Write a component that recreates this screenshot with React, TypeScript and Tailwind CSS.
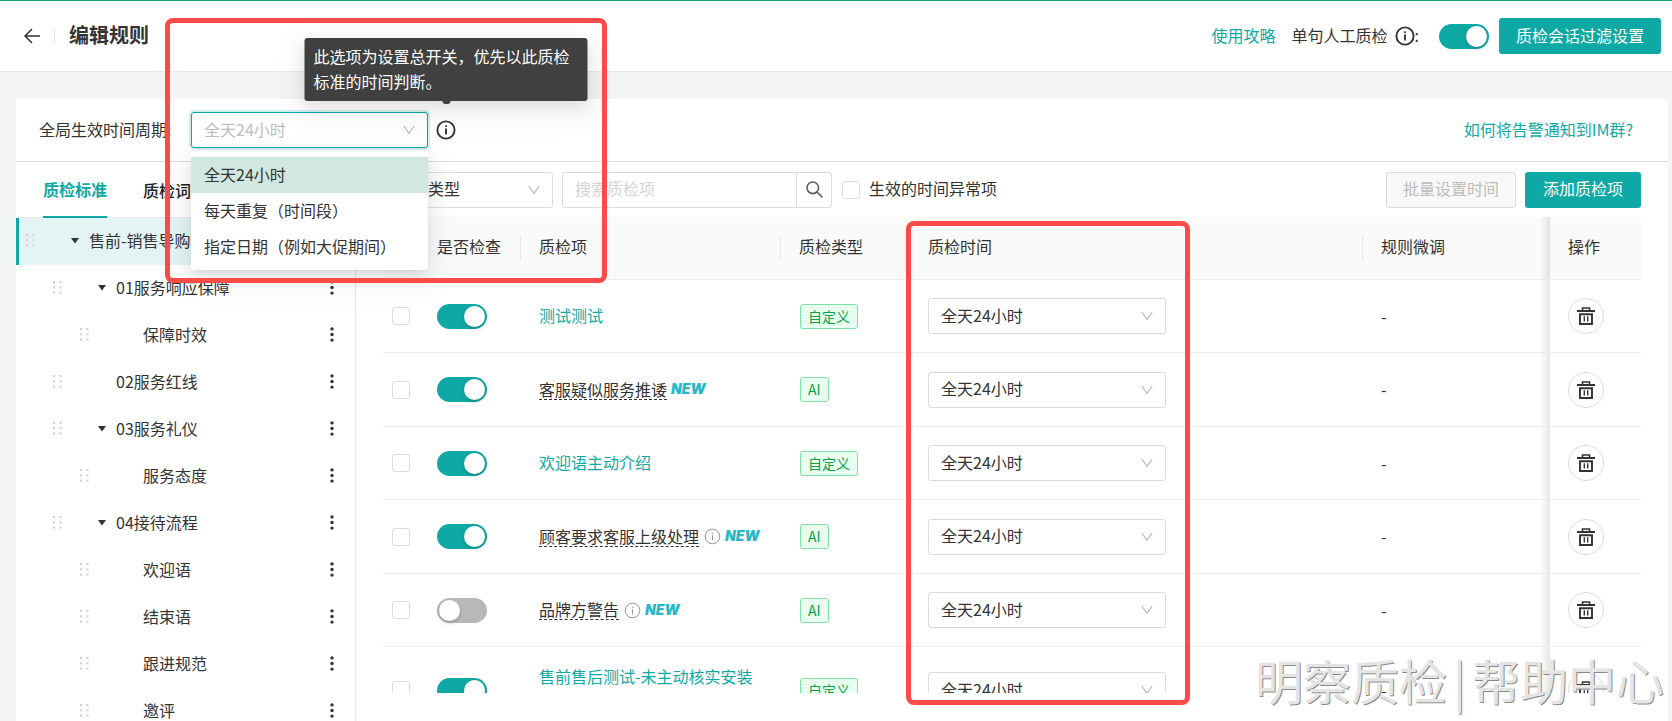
import React from "react";

type TreeNode = { label: string; level: 0 | 1 | 2; open?: boolean; active?: boolean };

const tree: TreeNode[] = [
  { label: "售前-销售导购类", level: 0, open: true, active: true },
  { label: "01服务响应保障", level: 1, open: true },
  { label: "保障时效", level: 2 },
  { label: "02服务红线", level: 1 },
  { label: "03服务礼仪", level: 1, open: true },
  { label: "服务态度", level: 2 },
  { label: "04接待流程", level: 1, open: true },
  { label: "欢迎语", level: 2 },
  { label: "结束语", level: 2 },
  { label: "跟进规范", level: 2 },
  { label: "邀评", level: 2 },
];

const indents = ["pl-[7px]", "pl-[34px]", "pl-[61px]"];

type Rule = { name: string; type: "自定义" | "AI"; on: boolean; info?: boolean };

const rules: Rule[] = [
  { name: "测试测试", type: "自定义", on: true },
  { name: "客服疑似服务推诿", type: "AI", on: true },
  { name: "欢迎语主动介绍", type: "自定义", on: true },
  { name: "顾客要求客服上级处理", type: "AI", on: true, info: true },
  { name: "品牌方警告", type: "AI", on: false, info: true },
  { name: "售前售后测试-未主动核实安装服务", type: "自定义", on: true },
];

const periods = ["全天24小时", "每天重复（时间段）", "指定日期（例如大促期间）"];

function InfoIcon({ className, bold }: { className: string; bold?: boolean }) {
  const w = bold ? 1.9 : 1.1;
  return (
    <svg viewBox="0 0 20 20" className={className} fill="none" stroke="currentColor" strokeWidth={w} aria-hidden="true">
      <circle cx="10" cy="10" r="8.6" />
      <path d="M10 8.6v5.8" />
      <circle cx="10" cy="6.2" r={bold ? 0.6 : 0.5} fill="currentColor" strokeWidth={bold ? 1 : 0.8} />
    </svg>
  );
}

function Chevron() {
  return (
    <svg
      viewBox="0 0 12 12"
      className="pointer-events-none absolute top-1/2 right-[13px] h-3 w-3 -translate-y-1/2 text-[#bdbdbd]"
      fill="none"
      stroke="currentColor"
      strokeWidth="1.3"
      aria-hidden="true"
    >
      <path d="M0.8 2L6 9.4L11.2 2" />
    </svg>
  );
}

function SelectBox({ label, options, className }: { label: string; options: string[]; className: string }) {
  return (
    <div className={`relative ${className}`}>
      <select
        aria-label={label}
        className="block h-9 w-full appearance-none rounded-[3px] border border-[#dcdcdc] bg-white px-3 pb-[2px] text-[#333] outline-none"
      >
        {options.map((o) => (
          <option key={o}>{o}</option>
        ))}
      </select>
      <Chevron />
    </div>
  );
}

function Toggle({ label, on }: { label: string; on: boolean }) {
  return (
    <input
      type="checkbox"
      role="switch"
      aria-label={label}
      defaultChecked={on}
      className="block h-[25px] w-[50px] shrink-0 appearance-none rounded-full bg-[#b8b8b8] p-[2px] before:block before:h-[21px] before:w-[21px] before:rounded-full before:bg-white before:shadow-[0_2px_4px_rgba(0,35,11,0.2)] checked:bg-[#0fa9a5] checked:before:ml-[25px]"
    />
  );
}

const box = "block h-[18px] w-[18px] shrink-0 appearance-none rounded-[3px] border border-[#dcdcdc] bg-white checked:bg-[#0fa9a5]";

function TrashIcon() {
  return (
    <svg viewBox="0 0 18 18" className="h-[18px] w-[18px]" fill="none" stroke="#333" aria-hidden="true">
      <path d="M5.5 3.5V1h7v2.5" strokeWidth="1.6" />
      <path d="M0 4h18" strokeWidth="2" />
      <path d="M3 7.2h12V17H3z" strokeWidth="1.9" />
      <path d="M7.3 9.3v5.2M10.7 9.3v5.2" strokeWidth="1.4" />
    </svg>
  );
}

function DragDots() {
  return (
    <svg viewBox="0 0 9 13" className="h-[13px] w-[9px] shrink-0" fill="#cfcfcf" aria-hidden="true">
      {[0, 5.3, 10.6].map((y) => (
        <g key={y}>
          <rect x="0" y={y} width="2" height="2" />
          <rect x="6.5" y={y} width="2" height="2" />
        </g>
      ))}
    </svg>
  );
}

function TreeRow({ node }: { node: TreeNode }) {
  return (
    <li
      className={`flex h-[47px] items-center border-l-[3px] pr-[21px] pb-[2px] ${
        node.active ? "border-[#0fa9a5] bg-[#e4f4f5]" : "border-transparent"
      } ${indents[node.level]}`}
    >
      <DragDots />
      <span className="ml-9 flex w-[18px] shrink-0 justify-start">
        {node.open && (
          <svg viewBox="0 0 8 6" className="h-[6px] w-2" fill="#333" aria-hidden="true">
            <path d="M0 0h8L4 5.6z" />
          </svg>
        )}
      </span>
      <span className="flex-1 whitespace-nowrap">{node.label}</span>
      <button aria-label={`${node.label}更多操作`} className="shrink-0">
        <svg viewBox="0 0 4 15" className="h-[15px] w-1" fill="#333" aria-hidden="true">
          <circle cx="2" cy="1.9" r="1.7" />
          <circle cx="2" cy="7.5" r="1.7" />
          <circle cx="2" cy="13.1" r="1.7" />
        </svg>
      </button>
    </li>
  );
}

function HeadCell({ text, divider }: { text: string; divider?: boolean }) {
  return (
    <th className="relative px-[18px] pb-[3px] text-left font-normal">
      {text}
      {divider && <span className="absolute top-1/2 right-0 h-[26px] w-px -translate-y-1/2 bg-[#e8e8e8]" />}
    </th>
  );
}

function EdgeShadow() {
  return <span className="absolute inset-y-0 right-full w-[10px] bg-linear-to-l from-black/10 to-transparent" />;
}

function RuleName({ rule }: { rule: Rule }) {
  if (rule.type === "自定义") {
    return (
      <a href="#rule" className="block pb-[2px] leading-[25px] text-[#0fa9a5]">
        {rule.name}
      </a>
    );
  }
  return (
    <div className="flex items-center whitespace-nowrap">
      <span className="border-b border-dashed border-[#333] leading-[19px]">{rule.name}</span>
      {rule.info && <InfoIcon className="ml-[5px] h-[17px] w-[17px] shrink-0 text-[#8c8c8c]" />}
      <span className="ml-1 pb-[2px] font-[Inter,sans-serif] text-[14px] leading-[19px] font-black text-[#28b9c8] italic">NEW</span>
    </div>
  );
}

export default function App() {
  return (
    <div className="relative flex h-screen flex-col overflow-hidden bg-[#f3f5f5] font-['Noto_Sans_CJK_SC',sans-serif] text-[16px] leading-[25px] text-[#333]">
      <header className="flex h-[72px] shrink-0 items-center border-t border-b border-t-[#12a37f] border-b-[#e8e8e8] bg-white pr-[11px] pl-6">
        <button aria-label="返回">
          <svg viewBox="0 0 16 16" className="h-4 w-4" fill="none" stroke="#333" strokeWidth="1.5" aria-hidden="true">
            <path d="M16 8H1.2M8 1L1 8l7 7" />
          </svg>
        </button>
        <span className="mx-[14px] h-[14px] w-px bg-[#e8e8e8]" />
        <h1 className="pb-[3px] text-[20px] font-bold">编辑规则</h1>
        <a href="#guide" className="mr-4 ml-auto pb-[2px] text-[#0fa9a5]">
          使用攻略
        </a>
        <div className="mr-5 flex items-center">
          <span className="pb-[2px]">单句人工质检</span>
          <InfoIcon bold className="ml-[7px] h-5 w-5" />
          <span className="pb-[2px]">:</span>
        </div>
        <Toggle label="单句人工质检" on />
        <button className="ml-[10px] h-9 rounded-[3px] bg-[#0fa9a5] px-[17px] pb-[2px] text-white">质检会话过滤设置</button>
      </header>

      <main className="mt-[27px] mr-1 ml-4 flex min-h-0 flex-1 flex-col bg-white">
        <section className="flex h-[63px] shrink-0 items-center border-b border-[#dcdcdc] pr-[35px] pl-[23px]">
          <label htmlFor="global-period" className="w-[152px] pb-[2px]">
            全局生效时间周期:
          </label>
          <div className="relative z-20 w-[237px]">
            <select
              id="global-period"
              className="block h-9 w-full appearance-none rounded-[3px] border border-[#0fa9a5] bg-white px-3 pb-[2px] text-[#bdbdbd] shadow-[0_0_0_2px_rgba(15,169,165,0.2)] outline-none"
            >
              {periods.map((p) => (
                <option key={p}>{p}</option>
              ))}
            </select>
            <Chevron />
            <ul
              role="listbox"
              aria-label="全局生效时间周期选项"
              className="absolute top-10 left-0 w-full rounded-[3px] bg-white py-[5px] shadow-[0_3px_6px_-4px_rgba(0,0,0,0.12),0_6px_16px_rgba(0,0,0,0.08),0_9px_28px_8px_rgba(0,0,0,0.05)]"
            >
              {periods.map((p, i) => (
                <li
                  key={p}
                  role="option"
                  aria-selected={i === 0}
                  className={`flex h-9 items-center px-[13px] pb-[2px] whitespace-nowrap ${i === 0 ? "bg-[#d1e8e1]" : ""}`}
                >
                  {p}
                </li>
              ))}
            </ul>
          </div>
          <div className="relative ml-2">
            <InfoIcon bold className="h-5 w-5" />
            <div
              role="tooltip"
              className="absolute bottom-full left-1/2 z-30 mb-[19px] w-[283px] -translate-x-1/2 rounded-[3px] bg-[#404040] px-[9px] pt-[6px] pb-[7px] text-white shadow-[0_6px_16px_rgba(0,0,0,0.08),0_9px_28px_8px_rgba(0,0,0,0.05)]"
            >
              此选项为设置总开关，优先以此质检标准的时间判断。
              <span className="absolute top-full left-1/2 h-[3px] w-2 -translate-x-1/2 rounded-b-full bg-[#404040]" />
            </div>
          </div>
          <a href="#alarm" className="ml-auto pb-[2px] text-[#0fa9a5]">
            如何将告警通知到IM群?
          </a>
        </section>

        <div className="flex min-h-0 flex-1">
          <aside className="flex w-[340px] shrink-0 flex-col overflow-hidden border-r border-[#e8e8e8]">
            <nav className="flex h-[56px] shrink-0 items-stretch gap-9 border-b border-[#e8e8e8] pl-[27px] font-medium">
              <a href="#standard" className="-mb-px flex items-center border-b-2 border-[#0fa9a5] font-bold text-[#0fa9a5]">
                质检标准
              </a>
              <a href="#words" className="flex items-center pt-[2px] text-[#222]">
                质检词库
              </a>
            </nav>
            <ul>
              {tree.map((n) => (
                <TreeRow key={n.label} node={n} />
              ))}
            </ul>
          </aside>

          <div className="mr-[27px] mb-7 ml-[27px] flex min-w-0 flex-1 flex-col overflow-hidden">
            <div className="flex h-[55px] shrink-0 items-center">
              <SelectBox label="类型" options={["全部类型"]} className="w-[170px]" />
              <div className="ml-[9px] flex h-9 w-[270px] rounded-[3px] border border-[#dcdcdc]">
                <input
                  type="search"
                  aria-label="搜索质检项"
                  placeholder="搜索质检项"
                  className="min-w-0 flex-1 px-3 pb-[2px] outline-none placeholder:text-[#d4d4d4]"
                />
                <button aria-label="搜索" className="flex w-[35px] items-center justify-center border-l border-[#dcdcdc]">
                  <svg viewBox="0 0 17 17" className="h-[17px] w-[17px]" fill="none" stroke="#5c5c5c" strokeWidth="1.6" aria-hidden="true">
                    <circle cx="6.8" cy="6.8" r="5.8" />
                    <path d="M11 11l5.4 5.4" />
                  </svg>
                </button>
              </div>
              <label className="ml-[10px] flex items-center gap-[9px]">
                <input type="checkbox" className={box} />
                <span className="pb-[2px]">生效的时间异常项</span>
              </label>
              <button className="ml-auto h-9 rounded-[3px] border border-[#dcdcdc] bg-[#f8f8f8] px-4 pb-[2px] text-[#bdbdbd]">
                批量设置时间
              </button>
              <button className="ml-[9px] h-9 rounded-[3px] bg-[#0fa9a5] px-[18px] pb-[2px] text-white">添加质检项</button>
            </div>

            <div className="min-h-0 flex-1 overflow-hidden">
              <table className="w-full table-fixed border-separate border-spacing-0">
                <colgroup>
                  <col className="w-[36px]" />
                  <col className="w-[102px]" />
                  <col className="w-[260px]" />
                  <col className="w-[129px]" />
                  <col />
                  <col className="w-[187px]" />
                  <col className="w-[91px]" />
                </colgroup>
                <thead>
                  <tr className="h-[63px] bg-[#fafafa] *:border-b *:border-[#ececec]">
                    <th className="pl-[9px]">
                      <input type="checkbox" aria-label="全选" className={box} />
                    </th>
                    <HeadCell text="是否检查" divider />
                    <HeadCell text="质检项" divider />
                    <HeadCell text="质检类型" divider />
                    <HeadCell text="质检时间" divider />
                    <HeadCell text="规则微调" />
                    <th className="relative px-[18px] pb-[3px] text-left font-normal">
                      <EdgeShadow />
                      操作
                    </th>
                  </tr>
                </thead>
                <tbody>
                  {rules.map((r) => (
                    <tr key={r.name} className="h-[73px] *:border-b *:border-[#ececec] even:h-[74px]">
                      <td className="pl-[9px]">
                        <input type="checkbox" aria-label={`选择${r.name}`} className={box} />
                      </td>
                      <td className="px-[18px]">
                        <Toggle label={`检查${r.name}`} on={r.on} />
                      </td>
                      <td className="py-[17px] pr-6 pl-[18px]">
                        <RuleName rule={r} />
                      </td>
                      <td className="pr-4 pb-[2px] pl-[19px]">
                        <span className="inline-block rounded-[3px] border border-[#7ee2a8] bg-[#e8ffef] px-[7px] pb-px align-middle text-[14px] leading-[22px] text-[#0a9f4c]">
                          {r.type}
                        </span>
                      </td>
                      <td className="px-[18px]">
                        <SelectBox label={`${r.name}质检时间`} options={periods} className="w-[238px]" />
                      </td>
                      <td className="px-[18px]">-</td>
                      <td className="relative px-[18px]">
                        <EdgeShadow />
                        <button
                          aria-label={`删除${r.name}`}
                          className="flex h-9 w-9 items-center justify-center rounded-full border border-[#dcdcdc]"
                        >
                          <TrashIcon />
                        </button>
                      </td>
                    </tr>
                  ))}
                </tbody>
              </table>
            </div>
          </div>
        </div>
      </main>

      <div className="pointer-events-none absolute top-[18px] left-[165px] z-40 h-[265px] w-[442px] rounded-lg border-[5px] border-[#f94b47]" />
      <div className="pointer-events-none absolute top-[221px] left-[906px] z-40 h-[484px] w-[284px] rounded-lg border-[5px] border-[#f94b47]" />
      <div className="pointer-events-none absolute right-[8px] bottom-[12px] z-50 flex text-[48px] leading-[60px] font-normal text-[#e4e4e4] [text-shadow:1px_1px_0_#8a8a8a]">
        <span>明察质检</span>
        <span className="px-[6px]">|</span>
        <span>帮助中心</span>
      </div>
    </div>
  );
}
